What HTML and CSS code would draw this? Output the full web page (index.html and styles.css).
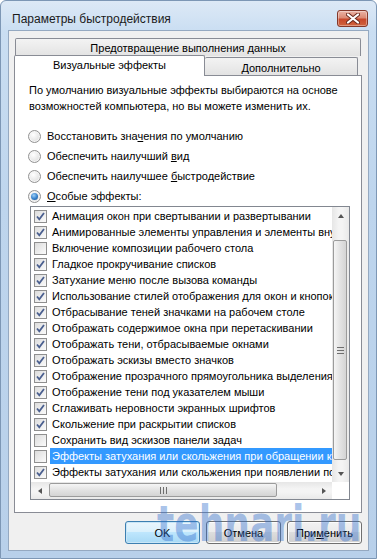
FILE: index.html
```html
<!DOCTYPE html>
<html lang="ru">
<head>
  <meta charset="UTF-8" />
  <title>Параметры быстродействия</title>
  <link rel="stylesheet" href="styles.css">
</head>
<body>

  <div class="window">
    <div class="titlebar">
      <div class="title">Параметры быстродействия</div>
      <div class="close-btn">
        <svg width="14" height="11" viewBox="0 0 14 11">
          <path d="M2 1.5 L12 9.5 M12 1.5 L2 9.5" stroke="#6b2a1e" stroke-width="4" stroke-linecap="round"/>
          <path d="M2 1.5 L12 9.5 M12 1.5 L2 9.5" stroke="#fff" stroke-width="2.2" stroke-linecap="round"/>
        </svg>
      </div>
    </div>

    <div class="client">
      <div class="tabs">
        <div class="tab-row top-row">
          <div class="tab tab-wide">Предотвращение выполнения данных</div>
        </div>
        <div class="tab-row front-row">
          <div class="tab tab-active">Визуальные эффекты</div>
          <div class="tab tab-other">Дополнительно</div>
        </div>
      </div>

      <div class="panel">
        <p class="intro">По умолчанию визуальные эффекты выбираются на основе<br>возможностей компьютера, но вы можете изменить их.</p>

        <div class="radios">
          <div class="radio-row"><span class="radio"></span><span>Восстановить зна<u>ч</u>ения по умолчанию</span></div>
          <div class="radio-row"><span class="radio"></span><span>Обеспечить наилучший <u>в</u>ид</span></div>
          <div class="radio-row"><span class="radio"></span><span>Обеспечить наилучшее <u>б</u>ыстродействие</span></div>
          <div class="radio-row"><span class="radio checked"></span><span><u>О</u>собые эффекты:</span></div>
        </div>

        <div class="listbox">
          <div class="list-main">
            <div class="items" id="items"></div>
            <div class="vscroll">
              <div class="sb-btn"><span class="arr arr-up"></span></div>
              <div class="vtrack">
                <div class="vthumb"><span class="grip-v"></span></div>
              </div>
              <div class="sb-btn"><span class="arr arr-down"></span></div>
            </div>
          </div>
          <div class="hscroll-row">
            <div class="hscroll">
              <div class="sb-btn-h"><span class="arr arr-left"></span></div>
              <div class="hthumb"><span class="grip-h"></span></div>
              <div class="htrack"></div>
              <div class="sb-btn-h"><span class="arr arr-right"></span></div>
            </div>
            <div class="corner"></div>
          </div>
        </div>
      </div>

      <div class="buttons">
        <div class="btn btn-default">OK</div>
        <div class="btn">Отмена</div>
        <div class="btn"><span>При<u>м</u>енить</span></div>
      </div>
    </div>

    <div class="watermark">tehnari.ru</div>
  </div>

  <script>
    const effects = [
      ["Анимация окон при свертывании и развертывании", true],
      ["Анимированные элементы управления и элементы внутри окна", true],
      ["Включение композиции рабочего стола", false],
      ["Гладкое прокручивание списков", true],
      ["Затухание меню после вызова команды", true],
      ["Использование стилей отображения для окон и кнопок", true],
      ["Отбрасывание теней значками на рабочем столе", true],
      ["Отображать содержимое окна при перетаскивании", true],
      ["Отображать тени, отбрасываемые окнами", true],
      ["Отображать эскизы вместо значков", true],
      ["Отображение прозрачного прямоугольника выделения", true],
      ["Отображение тени под указателем мыши", true],
      ["Сглаживать неровности экранных шрифтов", true],
      ["Скольжение при раскрытии списков", true],
      ["Сохранить вид эскизов панели задач", false],
      ["Эффекты затухания или скольжения при обращении к меню", false, true],
      ["Эффекты затухания или скольжения при появлении подсказок", true]
    ];

    const checkSvg = `<svg width="13" height="13" viewBox="0 0 13 13"><path d="M3 6.5 L5.3 9.3 L10 3" fill="none" stroke="#4a5f8f" stroke-width="1.8"/></svg>`;

    const list = document.getElementById('items');
    effects.forEach(([text, checked, selected]) => {
      const row = document.createElement('div');
      row.className = 'item';
      row.innerHTML = `
        <span class="checkbox">${checked ? checkSvg : ''}</span>
        <span class="label${selected ? ' selected' : ''}">${text}</span>
      `;
      list.appendChild(row);
    });
  </script>

</body>
</html>
```

FILE: styles.css
```css
body {
  margin: 0;
  padding: 0;
  font-family: 'Liberation Sans', Arial, sans-serif;
  font-size: 11px;
  color: #000;
}

.window {
  position: relative;
  width: 377px;
  height: 559px;
  box-sizing: border-box;
  padding: 0 7px 7px 7px;
  display: flex;
  flex-direction: column;
  border: 1px solid #7d97b5;
  border-radius: 6px 6px 0 0;
  background: linear-gradient(180deg, #dde9f6 0px, #cadef2 30px, #bed5ed 200px, #b8d0ea 100%);
  overflow: hidden;
}

.titlebar {
  height: 29px;
  display: flex;
  justify-content: space-between;
  align-items: flex-start;
}

.title {
  margin-top: 10px;
  padding-left: 4px;
  font-size: 12px;
  line-height: 16px;
  color: #1b1b1b;
}

.close-btn {
  margin-top: 9px;
  margin-right: 1px;
  width: 29px;
  height: 15px;
  border: 1px solid #84382a;
  border-radius: 3px;
  background: linear-gradient(180deg, #eab3a5 0%, #dc8a74 45%, #c8472a 55%, #d0643e 100%);
  display: flex;
  justify-content: center;
  align-items: center;
  box-shadow: inset 0 0 0 1px rgba(255, 255, 255, 0.35);
}

/* client area */
.client {
  flex: 1;
  display: flex;
  flex-direction: column;
  background: #f0f0f0;
  border: 1px solid #95a9c1;
  padding: 7px 6px 6px 5px;
}

.tab {
  box-sizing: border-box;
  border: 1px solid #898c95;
  border-bottom: none;
  text-align: center;
  border-radius: 2px 2px 0 0;
}

.top-row {
  padding: 0 1px;
}

.tab-wide {
  height: 18px;
  line-height: 18px;
  background: linear-gradient(180deg, #f3f3f3, #e3e3e3);
}

.front-row {
  display: flex;
  align-items: flex-end;
  margin-top: -1px;
  margin-bottom: -1px;
  position: relative;
  z-index: 1;
}

.tab-active {
  width: 191px;
  height: 21px;
  line-height: 19px;
  background: #fff;
}

.tab-other {
  width: 153px;
  height: 18px;
  margin-bottom: 1px;
  border-left: none;
  line-height: 20px;
  background: linear-gradient(180deg, #f3f3f3, #e3e3e3);
}

.panel {
  flex: 1;
  background: #fff;
  border: 1px solid #898c95;
  padding: 6px 0 0 15px;
}

.intro {
  margin: 0 0 0 -1px;
  line-height: 16px;
}

.radios {
  margin-top: 12px;
  margin-left: -2px;
}

.radio-row {
  height: 20px;
  display: flex;
  align-items: center;
}

.radio {
  width: 11px;
  height: 11px;
  border: 1px solid #929292;
  border-radius: 50%;
  margin-right: 6px;
  background: radial-gradient(circle at 40% 35%, #ffffff 0%, #e8e8e8 55%, #d4d4d4 100%);
  box-shadow: inset 0 0 0 1px #f6f6f6;
  position: relative;
}

.radio.checked::after {
  content: "";
  position: absolute;
  left: 2px;
  top: 2px;
  width: 7px;
  height: 7px;
  border-radius: 50%;
  background: radial-gradient(circle at 40% 35%, #9fd0f7 0%, #3c86cf 50%, #164d8a 100%);
}

/* list box */
.listbox {
  width: 318px;
  border: 1px solid #828790;
  background: #fff;
}

.list-main {
  display: flex;
  height: 275px;
}

.items {
  flex: 1;
  overflow: hidden;
  padding-top: 1px;
  white-space: nowrap;
}

.item {
  height: 16px;
  display: flex;
  align-items: center;
  padding-left: 3px;
}

.checkbox {
  flex: none;
  width: 11px;
  height: 11px;
  border: 1px solid #8f8f8f;
  background: linear-gradient(135deg, #dcdcdc, #fbfbfb);
  margin-right: 3px;
  position: relative;
}

.checkbox svg {
  position: absolute;
  left: -1px;
  top: -1px;
}

.label {
  padding: 0 2px;
  line-height: 16px;
  font-size: 11px;
}

.label.selected {
  background: #3399ff;
  color: #fff;
}

.vscroll {
  width: 17px;
  display: flex;
  flex-direction: column;
  background: linear-gradient(90deg, #e6e6e6, #f4f4f4 40%, #f4f4f4 60%, #e9e9e9);
}

.sb-btn {
  height: 17px;
  display: flex;
  justify-content: center;
  align-items: center;
}

.vtrack {
  flex: 1;
  padding: 16px 2px 5px 1px;
  display: flex;
}

.vthumb {
  flex: 1;
  border: 1px solid #9b9b9b;
  border-radius: 2px;
  background: linear-gradient(90deg, #f5f5f5, #e3e3e3 50%, #d4d4d4);
  display: flex;
  justify-content: center;
  align-items: center;
}

.grip-v {
  width: 7px;
  height: 7px;
  background: repeating-linear-gradient(180deg, #6e6e6e 0 1px, transparent 1px 3px);
}

.hscroll-row {
  display: flex;
  height: 17px;
}

.hscroll {
  flex: 1;
  display: flex;
  background: linear-gradient(180deg, #e6e6e6, #f4f4f4 40%, #f4f4f4 60%, #e9e9e9);
}

.sb-btn-h {
  width: 17px;
  display: flex;
  justify-content: center;
  align-items: center;
}

.hthumb {
  width: 226px;
  margin: 1px 0 2px 1px;
  border: 1px solid #9b9b9b;
  border-radius: 2px;
  background: linear-gradient(180deg, #f5f5f5, #e3e3e3 50%, #d4d4d4);
  display: flex;
  justify-content: center;
  align-items: center;
}

.grip-h {
  width: 7px;
  height: 7px;
  background: repeating-linear-gradient(90deg, #6e6e6e 0 1px, transparent 1px 3px);
}

.htrack {
  flex: 1;
}

.corner {
  width: 17px;
  background: #fff;
}

.arr {
  width: 0;
  height: 0;
  border: 3px solid transparent;
}

.arr-up { border-bottom: 4px solid #555; border-top: none; }
.arr-down { border-top: 4px solid #555; border-bottom: none; }
.arr-left { border-right: 4px solid #555; border-left: none; }
.arr-right { border-left: 4px solid #555; border-right: none; }

/* buttons */
.buttons {
  margin-top: 8px;
  display: flex;
  justify-content: flex-end;
  gap: 6px;
}

.btn {
  box-sizing: border-box;
  width: 75px;
  height: 23px;
  border: 1px solid #707070;
  border-radius: 3px;
  background: linear-gradient(180deg, #f2f2f2 0%, #ebebeb 49%, #dddddd 50%, #cfcfcf 100%);
  box-shadow: inset 0 0 0 1px #fcfcfc;
  display: flex;
  justify-content: center;
  align-items: center;
}

.btn-default {
  border-color: #3c7fb1;
  background: linear-gradient(180deg, #eaf6fd 0%, #d9f0fc 49%, #bee6fd 50%, #a7d9f5 100%);
  box-shadow: inset 0 0 0 1px #c8e6f7;
}

.watermark {
  position: absolute;
  left: 156px;
  top: 494px;
  font-family: 'DejaVu Sans', sans-serif;
  font-weight: bold;
  font-size: 50px;
  color: rgba(50, 110, 205, 0.42);
  transform: scaleX(0.72);
  transform-origin: left top;
  pointer-events: none;
}
```
